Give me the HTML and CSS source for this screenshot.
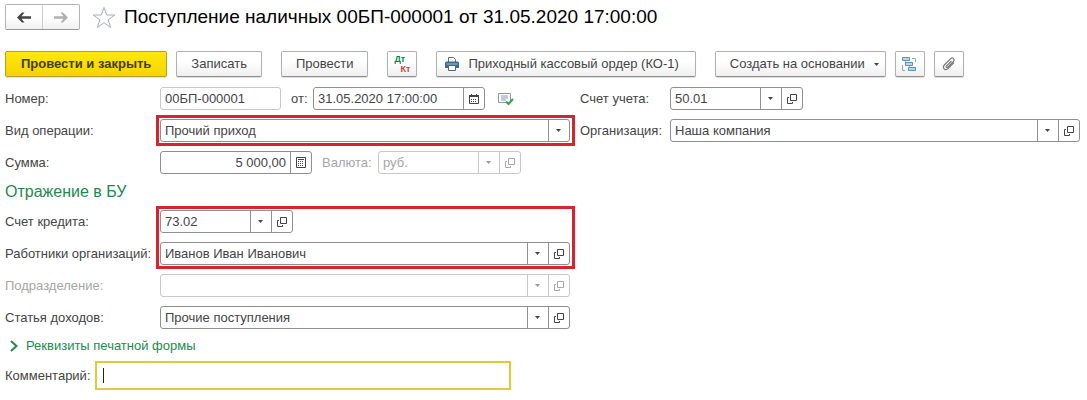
FILE: index.html
```html
<!DOCTYPE html>
<html lang="ru">
<head>
    <meta charset="UTF-8">
    <meta name="viewport" content="width=device-width, initial-scale=1.0">
    <title>Поступление наличных</title>
    <link rel="stylesheet" href="styles.css">
</head>
<body>
    <!-- Shared icon for "open" buttons -->
    <svg class="sprite" aria-hidden="true">
        <symbol id="icon-open" viewBox="0 0 10 10">
            <path d="M3.500 .5h6v6h-6zM2 3.500H.5v6h5V8" fill="none" stroke="currentColor"/>
        </symbol>
    </svg>

    <header class="title-bar">
        <div class="history">
            <button type="button" aria-label="Назад">
                <svg width="14" height="11" viewBox="0 0 14 11"><path d="M5 .5h2.500L4.500 4.300H14v2.400H4.500l3 3.800H5l-5-5z" fill="currentColor"/></svg>
            </button>
            <button type="button" class="forward" aria-label="Вперед">
                <svg width="14" height="11" viewBox="0 0 14 11"><path d="M9 .5H6.500l3 3.800H0v2.400h9.500l-3 3.800H9l5-5z" fill="currentColor"/></svg>
            </button>
        </div>
        <button type="button" class="favorite" aria-label="В избранное">
            <svg width="24" height="23" viewBox="0 0 24 23"><path d="M12 1.500l2.600 7.500h8.200l-6.600 4.800 2.500 7.700-6.700-4.700-6.700 4.700 2.500-7.700L1.200 9h8.200z" fill="#fff" stroke="#a9afb8"/></svg>
        </button>
        <h1>Поступление наличных 00БП-000001 от 31.05.2020 17:00:00</h1>
    </header>

    <div class="toolbar">
        <button type="button" class="btn primary">Провести и закрыть</button>
        <button type="button" class="btn">Записать</button>
        <button type="button" class="btn spaced">Провести</button>
        <button type="button" class="btn icon-btn spaced dtkt" aria-label="Показать проводки">
            <span class="dt">Дт</span>
            <span class="kt">Кт</span>
        </button>
        <button type="button" class="btn print spaced">
            <svg width="14" height="14" viewBox="0 0 14 14">
                <path d="M3.500 5V.5h5l2 2V5" fill="#fff" stroke="#5b6f80"/>
                <path d="M1 4.500h12l1 1V11H0V5.500z" fill="#3d6b92"/>
                <path d="M1.500 7h11" stroke="#9fc0da"/>
                <path d="M3.500 8.500h7v5h-7z" fill="#fff" stroke="#4b6478"/>
            </svg>
            Приходный кассовый ордер (КО-1)
        </button>
        <button type="button" class="btn create spaced">
            Создать на основании
            <svg width="5" height="3" viewBox="0 0 5 3"><path d="M0 0h5L2.500 3z" fill="currentColor"/></svg>
        </button>
        <button type="button" class="btn icon-btn" aria-label="Структура подчиненности">
            <svg width="15" height="15" viewBox="0 0 15 15" fill="none" stroke="#5b8fb3">
                <path d="M10 1.500h3.500V5M3 13.500H.5V8" stroke="#8fa9ba"/>
                <path d="M3.500 4.500v3H5M7.500 9.500v3H8"/>
                <path d="M.5 .5h7v3h-7zM3.500 5.500h7v3h-7zM6.500 10.500h7v3h-7z" fill="#b9d8ec"/>
            </svg>
        </button>
        <button type="button" class="btn icon-btn" aria-label="Присоединенные файлы">
            <svg width="14" height="14" viewBox="0 0 14 14"><path d="M9.500 4L4.300 9.200c-.8.8.4 2 1.200 1.200l6-6c1.900-1.900-.9-4.700-2.800-2.800L2.300 8c-2.700 2.700 1 6.400 3.700 3.700L12 5.700" fill="none" stroke="#777" stroke-width="1.200"/></svg>
        </button>
    </div>

    <form class="form">
        <div class="columns">
            <div class="row">
                <label for="number">Номер:</label>
                <div class="field light number"><input type="text" id="number" value="00БП-000001"></div>
                <label for="date" class="inline-label">от:</label>
                <div class="field date">
                    <input type="text" id="date" value="31.05.2020 17:00:00">
                    <button type="button" aria-label="Календарь">
                        <svg width="10" height="10" viewBox="0 0 10 10"><path d="M.5 1.500h9v8h-9z" fill="none" stroke="#444"/><path d="M0 1h10v2H0zM2 0h1v1H2zM7 0h1v1H7z" fill="#444"/><path d="M2 5.500h6M2 7.500h6" stroke="#444" stroke-dasharray="1 1"/></svg>
                    </button>
                </div>
                <svg class="status" width="16" height="14" viewBox="0 0 16 14">
                    <path d="M.5 1.500h12v9H.5z" fill="#fff" stroke="#8c98a8"/>
                    <path d="M3 4h7M3 6h7M3 8h5" stroke="#8c98a8"/>
                    <path d="M8 9.500l2.500 2.500L15 7" fill="none" stroke="#2faa3f" stroke-width="2"/>
                </svg>
            </div>
            <div class="row right">
                <label for="account">Счет учета:</label>
                <div class="field short">
                    <select id="account"><option>50.01</option></select>
                    <button type="button" aria-label="Открыть"><svg width="10" height="10"><use href="#icon-open"/></svg></button>
                </div>
            </div>

            <div class="row marked">
                <label for="operation">Вид операции:</label>
                <div class="field"><select id="operation"><option>Прочий приход</option></select></div>
            </div>
            <div class="row right">
                <label for="company">Организация:</label>
                <div class="field">
                    <select id="company"><option>Наша компания</option></select>
                    <button type="button" aria-label="Открыть"><svg width="10" height="10"><use href="#icon-open"/></svg></button>
                </div>
            </div>

            <div class="row">
                <label for="sum">Сумма:</label>
                <div class="field sum">
                    <input type="text" id="sum" value="5 000,00">
                    <button type="button" aria-label="Калькулятор">
                        <svg width="10" height="11" viewBox="0 0 10 11"><path d="M.5 .5h9v10h-9z" fill="none" stroke="#444"/><path d="M2 2.500h6" stroke="#444"/><path d="M2 4.500h6M2 6.500h6M2 8.500h6" stroke="#444" stroke-dasharray="1 1"/></svg>
                    </button>
                </div>
                <label for="currency" class="inline-label currency-label muted">Валюта:</label>
                <div class="field light muted currency">
                    <select id="currency" disabled><option>руб.</option></select>
                    <button type="button" disabled aria-label="Открыть"><svg width="10" height="10"><use href="#icon-open"/></svg></button>
                </div>
            </div>
        </div>

        <h2>Отражение в БУ</h2>

        <div class="columns">
            <div class="rows">
                <div class="rows marked">
                    <div class="row">
                        <label for="credit">Счет кредита:</label>
                        <div class="field short">
                            <select id="credit"><option>73.02</option></select>
                            <button type="button" aria-label="Открыть"><svg width="10" height="10"><use href="#icon-open"/></svg></button>
                        </div>
                    </div>
                    <div class="row">
                        <label for="worker">Работники организаций:</label>
                        <div class="field">
                            <select id="worker"><option>Иванов Иван Иванович</option></select>
                            <button type="button" aria-label="Открыть"><svg width="10" height="10"><use href="#icon-open"/></svg></button>
                        </div>
                    </div>
                </div>
                <div class="row">
                    <label for="department" class="muted">Подразделение:</label>
                    <div class="field light muted">
                        <select id="department" disabled><option></option></select>
                        <button type="button" disabled aria-label="Открыть"><svg width="10" height="10"><use href="#icon-open"/></svg></button>
                    </div>
                </div>
                <div class="row">
                    <label for="income">Статья доходов:</label>
                    <div class="field">
                        <select id="income"><option>Прочие поступления</option></select>
                        <button type="button" aria-label="Открыть"><svg width="10" height="10"><use href="#icon-open"/></svg></button>
                    </div>
                </div>
            </div>
        </div>

        <a href="#" class="expand">
            <svg width="8" height="12" viewBox="0 0 8 12"><path d="M1 1l5.500 5L1 11" fill="none" stroke="currentColor" stroke-width="2"/></svg>
            Реквизиты печатной формы
        </a>

        <div class="comment">
            <label for="comment">Комментарий:</label>
            <input type="text" id="comment">
        </div>
    </form>
</body>
</html>
```
FILE: styles.css
```css
:root {
    --text: #444;
    --muted: #a6a6a6;
    --border: #8f8f8f;
    --border-light: #c8c8c8;
    --green: #23894f;
    --red: #d9232e;
}

* {
    box-sizing: border-box;
}

body {
    margin: 0;
    padding: 4px 7px 10px 5px;
    background-color: #fff;
    color: var(--text);
    font: 13px/18px "Liberation Sans", Arial, sans-serif;
}

button, input, select {
    margin: 0;
    font: inherit;
    color: inherit;
}

.sprite {
    display: none;
}

/* Title */
.title-bar {
    display: flex;
    align-items: center;
    height: 26px;
}

.history {
    display: flex;
    width: 75px;
    height: 26px;
    border: 1px solid #b4b4b4;
    border-bottom-color: #999;
    border-radius: 2px;
    background: linear-gradient(#fff 50%, #f0f0f0);
}

.history button {
    display: flex;
    flex: 1;
    align-items: center;
    justify-content: center;
    padding: 0;
    border: none;
    background: none;
}

.history .forward {
    border-left: 1px solid #ccc;
    color: #b0b0b0;
}

.favorite {
    display: flex;
    margin: 0 8px 0 12px;
    padding: 0;
    border: none;
    background: none;
}

h1 {
    margin: 0;
    color: #000;
    font-size: 19px;
    font-weight: normal;
    line-height: 26px;
    white-space: nowrap;
}

/* Toolbar */
.toolbar {
    display: flex;
    gap: 9px;
    margin-top: 21px;
}

.btn {
    display: flex;
    align-items: center;
    justify-content: center;
    height: 26px;
    padding: 0 14px;
    border: 1px solid #b0b0b0;
    border-bottom-color: #8f8f8f;
    border-radius: 2px;
    background: linear-gradient(#fff 40%, #efefef);
    box-shadow: 0 1px 1px #ddd;
    white-space: nowrap;
}

.primary {
    padding: 0 15px;
    border-color: #b3a032;
    background: linear-gradient(#ffe80c, #f6d300);
    color: #443d12;
    font-weight: bold;
}

.spaced {
    margin-left: 10px;
}

.icon-btn {
    width: 30px;
    padding: 0;
}

.dtkt {
    flex-direction: column;
    align-items: stretch;
    padding: 0 6px;
    font-weight: bold;
    font-size: 9px;
    line-height: 10px;
}

.dt {
    color: #12804c;
    text-align: left;
}

.kt {
    color: #cf4048;
    text-align: right;
}

.print {
    gap: 9px;
    padding: 0 16px 0 8px;
}

.create {
    gap: 9px;
    padding-right: 6px;
}

/* Form */
.form {
    margin-top: 10px;
}

.columns {
    display: grid;
    grid-template-columns: 565fr 500fr;
    gap: 9px 10px;
}

.rows {
    display: grid;
    gap: 9px;
}

.row {
    display: flex;
    align-items: center;
    height: 23px;
}

.row > label {
    flex: 0 0 155px;
    white-space: nowrap;
}

.right > label {
    flex-basis: 90px;
}

.row > .inline-label {
    flex: 0 0 22px;
    margin-left: 10px;
}

.row > .currency-label {
    flex-basis: 56px;
}

.muted {
    color: var(--muted);
}

.field {
    display: flex;
    flex: 1;
    min-width: 0;
    height: 23px;
    border: 1px solid var(--line);
    border-radius: 3px;
    --line: var(--border);
}

.light {
    --line: var(--border-light);
}

.field input, .field select {
    flex: 1;
    width: 0;
    min-width: 0;
    padding: 0 4px;
    border: none;
    outline: none;
    background: none;
    opacity: 1;
}

/* Arrow cell at the right end of a list */
.field select {
    appearance: none;
    background:
        url("data:image/svg+xml,%3Csvg xmlns='http://www.w3.org/2000/svg' width='5' height='3'%3E%3Cpath d='M0 0h5L2.500 3z' fill='%23444'/%3E%3C/svg%3E") no-repeat right 8px center,
        linear-gradient(var(--line), var(--line)) no-repeat right 20px top / 1px 100%;
}

.field select:disabled {
    background:
        url("data:image/svg+xml,%3Csvg xmlns='http://www.w3.org/2000/svg' width='5' height='3'%3E%3Cpath d='M0 0h5L2.500 3z' fill='%23999'/%3E%3C/svg%3E") no-repeat right 8px center,
        linear-gradient(var(--line), var(--line)) no-repeat right 20px top / 1px 100%;
}

.field button {
    display: flex;
    flex: 0 0 21px;
    align-items: center;
    justify-content: center;
    padding: 0;
    border: none;
    border-left: 1px solid var(--line);
    background: none;
}

.number {
    flex: 0 0 121px;
}

.date {
    flex: 0 0 172px;
}

.short {
    flex: 0 0 133px;
}

.sum {
    flex: 0 0 152px;
}

.sum input {
    text-align: right;
}

.currency {
    flex: 0 0 143px;
}

.status {
    margin-left: 13px;
}

/* Red frame drawn over the fields */
.marked {
    position: relative;
}

.marked::after {
    content: "";
    position: absolute;
    inset: -4px -5px -4px 151px;
    border: 3px solid var(--red);
    pointer-events: none;
}

h2 {
    margin: 7px 0 8px;
    color: var(--green);
    font-size: 16px;
    font-weight: normal;
    line-height: 21px;
}

.expand {
    display: flex;
    align-items: center;
    gap: 8px;
    width: max-content;
    margin-top: 8px;
    padding-left: 5px;
    color: var(--green);
    text-decoration: none;
}

.comment {
    display: flex;
    align-items: center;
    margin-top: 6px;
}

.comment label {
    flex: 0 0 90px;
}

/* Active input with a text cursor */
.comment input {
    width: 416px;
    height: 29px;
    padding: 0 6px;
    border: 2px solid #e8c63c;
    outline: none;
    background: linear-gradient(#222, #222) no-repeat 6px center / 1px 15px;
}
```
